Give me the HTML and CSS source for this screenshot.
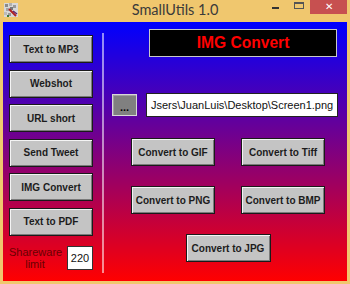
FILE: index.html
```html
<!DOCTYPE html>
<html lang="en">
<head>
  <meta charset="UTF-8" />
  <meta name="viewport" content="width=device-width, initial-scale=1.0" />
  <title>SmallUtils 1.0</title>
  <link rel="stylesheet" href="styles.css">
</head>
<body>
  <div class="window">
    <div class="titlebar">
      <svg class="app-icon" width="14" height="14" viewBox="0 0 14 14">
        <rect width="14" height="14" fill="#d8d8d8" />
        <rect x="1" y="1" width="3" height="3" fill="#8a8a8a" />
        <rect x="5" y="0" width="3" height="3" fill="#b0b0b0" />
        <rect x="9" y="2" width="3" height="3" fill="#999" />
        <rect x="2" y="5" width="3" height="3" fill="#a5a5a5" />
        <rect x="6" y="4" width="3" height="3" fill="#777" />
        <rect x="0" y="9" width="3" height="3" fill="#bbb" />
        <rect x="4" y="10" width="3" height="3" fill="#999" />
        <rect x="3" y="12" width="2" height="2" fill="#3a7a3a" />
        <path d="M5 6 L12 13" stroke="#b02020" stroke-width="2" />
        <path d="M9 8 L13 11" stroke="#602070" stroke-width="1.5" />
      </svg>
      <span class="title">SmallUtils 1.0</span>
      <div class="controls">
        <span class="min"></span>
        <span class="max"></span>
        <span class="close">✕</span>
      </div>
    </div>

    <div class="client">
      <div class="sidebar">
        <button class="btn">Text to MP3</button>
        <button class="btn">Webshot</button>
        <button class="btn">URL short</button>
        <button class="btn">Send Tweet</button>
        <button class="btn">IMG Convert</button>
        <button class="btn">Text to PDF</button>
        <div class="limit">
          <span class="limit-label">Shareware<br>limit</span>
          <span class="limit-box">220</span>
        </div>
      </div>

      <div class="divider"></div>

      <div class="panel">
        <div class="panel-title">IMG Convert</div>
        <div class="path-row">
          <button class="browse">...</button>
          <div class="path">Jsers\JuanLuis\Desktop\Screen1.png</div>
        </div>
        <div class="convert-grid">
          <button class="btn">Convert to GIF</button>
          <button class="btn">Convert to Tiff</button>
          <button class="btn">Convert to PNG</button>
          <button class="btn">Convert to BMP</button>
          <button class="btn jpg">Convert to JPG</button>
        </div>
      </div>
    </div>
  </div>
</body>
</html>
```

FILE: styles.css
```css
html, body {
  margin: 0;
  padding: 0;
  background: #f0c76e;
  font-family: 'Liberation Sans', Arial, sans-serif;
}
.window {
  width: 350px;
  height: 284px;
  background: #f0c76e;
}
.titlebar {
  height: 22px;
  display: grid;
  grid-template-columns: 1fr auto 1fr;
  align-items: start;
}
.app-icon {
  margin: 3px 0 0 4px;
}
.title {
  font-family: Lato, 'Open Sans', sans-serif;
  font-size: 14.5px;
  line-height: 20px;
  color: #3a3a3a;
}
.controls {
  display: flex;
  justify-content: flex-end;
  align-items: flex-start;
  margin-right: 3px;
}
.min {
  width: 7px;
  height: 2px;
  background: #333;
  margin: 7px 15px 0 0;
}
.max {
  width: 8px;
  height: 4px;
  border: 1px solid #555;
  border-top-width: 2px;
  margin: 2px 6px 0 0;
}
.close {
  width: 37px;
  height: 14px;
  background: #c75050;
  color: #fff;
  font-size: 10px;
  line-height: 14px;
  text-align: center;
}
.client {
  margin: 0 3px;
  height: 259px;
  display: flex;
  background: linear-gradient(#0000ff, #ff0000);
}
.sidebar {
  width: 84px;
  padding: 13px 0 0 6px;
  display: flex;
  flex-direction: column;
  gap: 6.5px;
}
.btn {
  box-sizing: border-box;
  width: 84px;
  height: 28px;
  padding: 0;
  margin: 0;
  background: #c4c4c4;
  border: 1px solid #1a1a1a;
  box-shadow: inset 1px 1px #f4f4f4, inset -1px -1px #7a7a7a;
  font-family: 'Liberation Sans', Arial, sans-serif;
  font-weight: bold;
  font-size: 10px;
  color: #1c1c1c;
}
.limit {
  margin-top: 4px;
  display: flex;
  align-items: center;
}
.limit-label {
  width: 52px;
  text-align: center;
  font-size: 11px;
  line-height: 12px;
  color: #6a0000;
}
.limit-box {
  box-sizing: border-box;
  margin-left: auto;
  width: 26px;
  height: 24px;
  background: #fff;
  border: 1px solid #333;
  font-size: 11px;
  line-height: 22px;
  text-align: center;
  color: #111;
}
.divider {
  align-self: flex-start;
  width: 2px;
  height: 240px;
  margin: 11px 0 0 9px;
  background: rgba(255, 255, 255, 0.55);
}
.panel {
  flex: 1;
  padding: 7px 9px 0 8px;
  display: flex;
  flex-direction: column;
}
.panel-title {
  align-self: flex-end;
  box-sizing: border-box;
  width: 188px;
  height: 28px;
  margin-right: 1px;
  background: #000;
  border: 1px solid #c8c8c8;
  color: #ff0000;
  font-weight: bold;
  font-size: 15.6px;
  display: flex;
  align-items: center;
  justify-content: center;
}
.path-row {
  margin-top: 36px;
  display: flex;
  align-items: center;
  gap: 9px;
}
.browse {
  box-sizing: border-box;
  width: 25px;
  height: 22px;
  padding: 0 0 3px;
  margin: 0;
  background: #808080;
  border: 1px solid #d8d8d8;
  box-shadow: inset 1px 1px #a0a0a0;
  font-family: 'Liberation Sans', Arial, sans-serif;
  font-weight: bold;
  font-size: 11px;
  line-height: 10px;
  color: #000;
  display: flex;
  align-items: flex-end;
  justify-content: center;
}
.path {
  box-sizing: border-box;
  width: 192px;
  height: 24px;
  padding-left: 4px;
  background: #fff;
  border: 1px solid #222;
  font-size: 11px;
  line-height: 22px;
  color: #111;
  white-space: nowrap;
  overflow: hidden;
}
.convert-grid {
  margin: 21px 0 0 19px;
  display: grid;
  grid-template-columns: 84px 84px;
  grid-auto-rows: 28px;
  column-gap: 26px;
  row-gap: 20px;
}
.jpg {
  grid-column: 1 / span 2;
  justify-self: center;
  width: 85px;
}
```
